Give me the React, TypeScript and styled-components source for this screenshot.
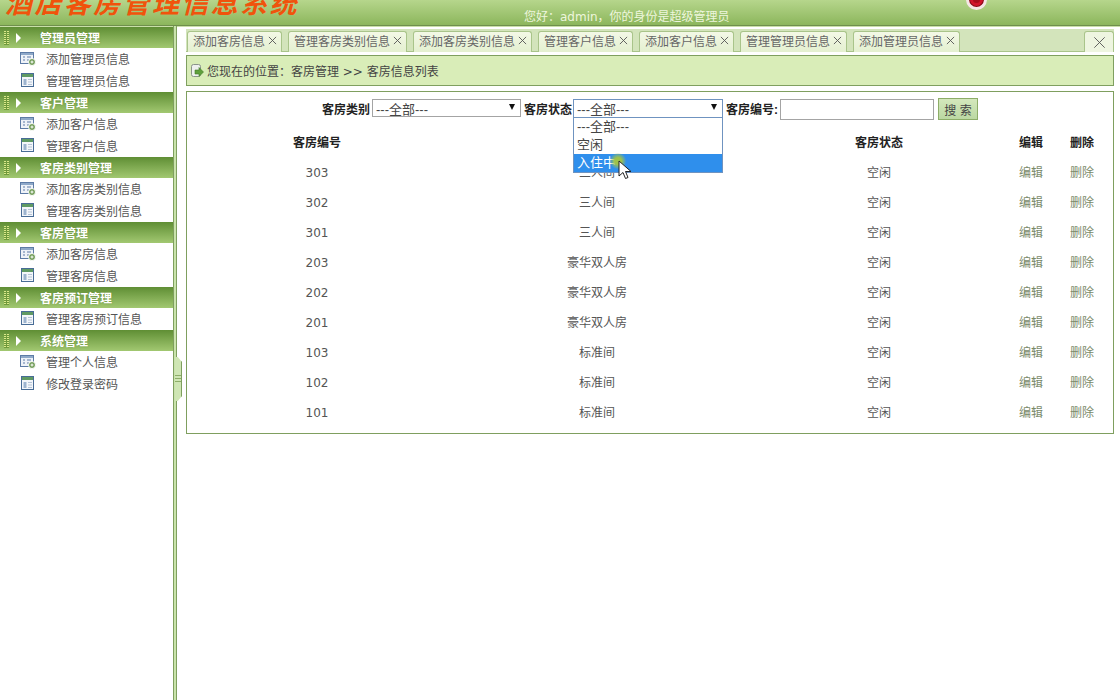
import * as React from "react";
import styled, { createGlobalStyle } from "styled-components";

const GlobalStyle = createGlobalStyle`
  html, body {
    margin: 0;
    padding: 0;
    height: 100%;
    background: #fff;
    font-family: "Liberation Sans", "Noto Sans CJK SC", sans-serif;
    font-size: 12px;
    overflow: hidden;
  }
`;

const Page = styled.div`
  width: 1120px;
  height: 700px;
  position: relative;
  overflow: hidden;
  display: flex;
  flex-direction: column;
`;

const Header = styled.div`
  height: 25px;
  flex: none;
  display: flex;
  overflow: hidden;
  background: linear-gradient(#b6d68c, #8cb65c);
  border-bottom: 1px solid #6f8f4c;
  box-shadow: 0 1px 0 #c9dfa8;
`;

const Title = styled.div`
  width: 524px;
  flex: none;
  margin-top: -15px;
  padding-left: 5px;
  box-sizing: border-box;
  font-family: "Noto Sans CJK SC", sans-serif;
  font-size: 27px;
  line-height: 34px;
  font-weight: 700;
  font-style: italic;
  letter-spacing: 2.4px;
  color: #f0530c;
  white-space: nowrap;
`;

const Greeting = styled.div`
  margin-top: 10px;
  font-family: "DejaVu Sans", "Noto Sans CJK SC", sans-serif;
  font-size: 12px;
  line-height: 15px;
  color: #eef6dd;
  white-space: nowrap;
`;

const RecordDot = styled.div`
  position: absolute;
  left: 966px;
  top: -11px;
  width: 21px;
  height: 21px;
  box-sizing: border-box;
  border-radius: 50%;
  background: #d2132a;
  border: 3px solid #f6e6e6;
  box-shadow: inset 0 0 0 1px #7d0c18;

  &::after {
    content: "";
    position: absolute;
    left: 4px;
    top: 4px;
    width: 7px;
    height: 7px;
    border-radius: 50%;
    background: #a80c1c;
  }
`;

const Body = styled.div`
  flex: 1;
  display: flex;
  min-height: 0;
`;

const Sidebar = styled.div`
  width: 173px;
  flex: none;
  padding-top: 1px;
  box-sizing: border-box;
`;

const GroupHead = styled.div`
  height: 21px;
  display: flex;
  align-items: center;
  background: linear-gradient(#5f8e34, #a2c871);
  color: #fff;
  font-weight: 700;
  font-size: 12px;
  text-shadow: 0 0 2px #6d9440;
  padding-left: 4px;
`;

const GripDots = styled.span`
  width: 5px;
  height: 14px;
  flex: none;
  background:
    linear-gradient(90deg, transparent 2px, #6f9a3c 2px 3px, transparent 3px),
    repeating-linear-gradient(#d9e88a 0 1px, #6f9a3c 1px 2px);
`;

const Arrow = styled.span`
  width: 0;
  height: 0;
  margin-left: 7px;
  margin-right: 19px;
  border-left: 5px solid #fff;
  border-top: 5px solid transparent;
  border-bottom: 5px solid transparent;
`;

const MenuItem = styled.div`
  height: 22px;
  box-sizing: border-box;
  padding: 0 0 2px 20px;
  display: flex;
  align-items: center;
  gap: 10px;
  color: #555;
  white-space: nowrap;
`;

const Splitter = styled.div`
  width: 4px;
  flex: none;
  box-sizing: border-box;
  position: relative;
  background: #c9e3ab;
  border-left: 1px solid #7f9f5f;
  border-right: 1px solid #7f9f5f;
`;

const SplitterGrip = styled.div`
  position: absolute;
  left: 1px;
  top: 331px;
  width: 7px;
  height: 44px;
  box-sizing: border-box;
  border-right: 1px solid #7f9f5f;
  background:
    repeating-linear-gradient(#8dad68 0 1px, transparent 1px 3px) center / 100% 9px no-repeat,
    #cfe6b4;
  clip-path: polygon(0 0, 40% 0, 100% 5px, 100% calc(100% - 5px), 40% 100%, 0 100%);
`;

const Main = styled.div`
  flex: 1;
  min-width: 0;
  padding: 3px 6px 0 9px;
  position: relative;
`;

const TabStrip = styled.div`
  height: 23px;
  box-sizing: border-box;
  display: flex;
  gap: 6px;
  padding: 2px 0 0 1px;
  background: #d3e4bb;
  border-bottom: 1px solid #a9c48a;
`;

const Tab = styled.div<{ $width: number }>`
  width: ${(p) => p.$width}px;
  box-sizing: border-box;
  height: 21px;
  padding: 0 0 3px 5px;
  display: flex;
  align-items: center;
  gap: 3px;
  border: 1px solid #a9c48a;
  border-bottom: none;
  border-radius: 3px 3px 0 0;
  background: linear-gradient(#f3f8e6, #e4f0d0);
  color: #666;
  white-space: nowrap;
`;

const TabClose = styled.span`
  width: 10px;
  display: inline-flex;
  color: #555;
`;

const CloseAll = styled.div`
  position: absolute;
  right: 6px;
  top: 5px;
  width: 30px;
  height: 21px;
  box-sizing: border-box;
  display: flex;
  align-items: center;
  justify-content: center;
  border: 1px solid #a9c48a;
  border-bottom: none;
  border-radius: 3px 3px 0 0;
  background: #eef5e0;
  color: #555;
`;

const Breadcrumb = styled.div`
  height: 31px;
  margin-top: 3px;
  box-sizing: border-box;
  display: flex;
  align-items: center;
  gap: 3px;
  padding-left: 3px;
  background: #d9edb8;
  border: 1px solid #7f9f5f;
  font-family: "DejaVu Sans", "Noto Sans CJK SC", sans-serif;
  color: #444;
  white-space: pre;
`;

const Panel = styled.div`
  margin-top: 5px;
  height: 343px;
  box-sizing: border-box;
  border: 1px solid #7f9f5f;
  padding-top: 6px;
  position: relative;
`;

const SearchRow = styled.div`
  height: 22px;
  display: flex;
  align-items: flex-start;
  justify-content: center;
  white-space: nowrap;
`;

const FieldLabel = styled.label<{ $left?: number; $right?: number }>`
  margin-left: ${(p) => p.$left ?? 0}px;
  margin-right: ${(p) => p.$right ?? 0}px;
  margin-top: 4px;
  line-height: 17px;
  font-weight: 700;
  color: #222;
`;

const FakeSelect = styled.div<{ $width: number; $active?: boolean }>`
  width: ${(p) => p.$width}px;
  height: ${(p) => (p.$active ? 19 : 18)}px;
  margin-top: 1px;
  box-sizing: border-box;
  display: flex;
  align-items: center;
  justify-content: space-between;
  padding: 0 5px 0 3px;
  background: #fff;
  border: 1px solid ${(p) => (p.$active ? "#6f93c0" : "#a4a4a4")};
  font-size: 13px;
  color: #444;
  position: relative;
`;

const Caret = styled.span`
  width: 0;
  height: 0;
  margin-bottom: 3px;
  border-left: 3px solid transparent;
  border-right: 3px solid transparent;
  border-top: 6px solid #111;
`;

const SearchInput = styled.input`
  width: 154px;
  height: 21px;
  margin-top: 1px;
  box-sizing: border-box;
  background: #fff;
  border: 1px solid #a4a4a4;
  outline: none;
`;

const SearchButton = styled.button`
  width: 40px;
  height: 22px;
  margin: 0 0 0 4px;
  padding: 0;
  background: linear-gradient(#d4e8bc, #bbd8a2);
  border: 1px solid #8dad68;
  color: #444;
  font-family: inherit;
  font-size: 12px;
`;

const DropList = styled.div`
  position: absolute;
  left: -1px;
  top: 17px;
  width: 150px;
  box-sizing: border-box;
  border: 1px solid #6f93c0;
  background: #fff;
  z-index: 2;
`;

const DropOption = styled.div<{ $hover?: boolean }>`
  height: 18px;
  line-height: 18px;
  padding-left: 3px;
  color: ${(p) => (p.$hover ? "#fff" : "#444")};
  background: ${(p) => (p.$hover ? "#2f8fec" : "#fff")};
`;

const ClickHalo = styled.span`
  position: absolute;
  left: 36px;
  top: 53px;
  width: 16px;
  height: 16px;
  border-radius: 50%;
  z-index: 3;
  background: radial-gradient(#9fc24a 30%, rgba(159, 194, 74, 0) 75%);
`;

const CursorIcon = styled.svg`
  position: absolute;
  left: 44px;
  top: 60px;
  z-index: 4;
`;

const Table = styled.table`
  width: 100%;
  margin-top: 6px;
  border-collapse: collapse;
  table-layout: fixed;
`;

const HeadCell = styled.th<{ $width: number }>`
  width: ${(p) => p.$width}px;
  height: 30px;
  padding: 0 0 2px;
  font-size: 12px;
  color: #222;
`;

const Cell = styled.td<{ $muted?: boolean }>`
  height: 30px;
  padding: 0;
  text-align: center;
  font-family: "DejaVu Sans", "Noto Sans CJK SC", sans-serif;
  line-height: 16px;
  color: ${(p) => (p.$muted ? "#7a8a6a" : "#555")};
`;

const tabs = [
  { label: "添加客房信息", width: 95 },
  { label: "管理客房类别信息", width: 119 },
  { label: "添加客房类别信息", width: 119 },
  { label: "管理客户信息", width: 95 },
  { label: "添加客户信息", width: 95 },
  { label: "管理管理员信息", width: 107 },
  { label: "添加管理员信息", width: 107 },
];

const menu: { title: string; items: { label: string; add?: boolean }[] }[] = [
  { title: "管理员管理", items: [{ label: "添加管理员信息", add: true }, { label: "管理管理员信息" }] },
  { title: "客户管理", items: [{ label: "添加客户信息", add: true }, { label: "管理客户信息" }] },
  { title: "客房类别管理", items: [{ label: "添加客房类别信息", add: true }, { label: "管理客房类别信息" }] },
  { title: "客房管理", items: [{ label: "添加客房信息", add: true }, { label: "管理客房信息" }] },
  { title: "客房预订管理", items: [{ label: "管理客房预订信息" }] },
  { title: "系统管理", items: [{ label: "管理个人信息", add: true }, { label: "修改登录密码" }] },
];

const rooms = [
  ["303", "三人间"],
  ["302", "三人间"],
  ["301", "三人间"],
  ["203", "豪华双人房"],
  ["202", "豪华双人房"],
  ["201", "豪华双人房"],
  ["103", "标准间"],
  ["102", "标准间"],
  ["101", "标准间"],
];

const AddIcon = () => (
  <svg width="16" height="15" viewBox="0 0 16 15">
    <rect x="0.5" y="1.5" width="13" height="11" fill="#eef2f8" stroke="#5d7ba6" />
    <rect x="1" y="2" width="12" height="2" fill="#8fa9c9" />
    <path d="M3 6h2M3 9h2M7 6h4M7 9h2" stroke="#5d7ba6" />
    <circle cx="12" cy="11" r="3.5" fill="#6f9a55" stroke="#fff" />
    <path d="M10.5 11h3M12 9.5v3" stroke="#fff" />
  </svg>
);

const ListIcon = () => (
  <svg width="16" height="15" viewBox="0 0 16 15">
    <rect x="1.5" y="0.5" width="12" height="13" fill="#f3f6fa" stroke="#486c96" />
    <rect x="2" y="1" width="11" height="3" fill="#5f9a63" />
    <rect x="3.5" y="6" width="3" height="6" fill="#9db4cf" />
    <path d="M8 6.5h4M8 9h4M8 11.5h4" stroke="#b4c3d6" />
  </svg>
);

const ArrowDocIcon = () => (
  <svg width="14" height="15" viewBox="0 0 14 15">
    <rect x="1.5" y="1.5" width="9" height="12" rx="2" fill="#eef1ee" stroke="#8a948a" />
    <path d="M5 7h4V4.5L13.5 9 9 13.5V11H5z" fill="#5fa03c" stroke="#3f7a26" strokeWidth="0.6" />
  </svg>
);

const CrossIcon = ({ size }: { size: number }) => (
  <svg width={size} height={size} viewBox="0 0 10 10">
    <path d="M1 1l8 8M9 1l-8 8" stroke="currentColor" strokeWidth={size > 10 ? 0.7 : 1} fill="none" />
  </svg>
);

export default function App() {
  return (
    <Page>
      <GlobalStyle />
      <Header>
        <Title>酒店客房管理信息系统</Title>
        <Greeting>您好：admin，你的身份是超级管理员</Greeting>
      </Header>
      <RecordDot />
      <Body>
        <Sidebar>
          {menu.map((group) => (
            <div key={group.title}>
              <GroupHead>
                <GripDots />
                <Arrow />
                {group.title}
              </GroupHead>
              {group.items.map((item) => (
                <MenuItem key={item.label}>
                  {item.add ? <AddIcon /> : <ListIcon />}
                  {item.label}
                </MenuItem>
              ))}
            </div>
          ))}
        </Sidebar>
        <Splitter>
          <SplitterGrip />
        </Splitter>
        <Main>
          <TabStrip>
            {tabs.map((tab) => (
              <Tab key={tab.label} $width={tab.width}>
                {tab.label}
                <TabClose>
                  <CrossIcon size={9} />
                </TabClose>
              </Tab>
            ))}
          </TabStrip>
          <CloseAll>
            <CrossIcon size={13} />
          </CloseAll>
          <Breadcrumb>
            <ArrowDocIcon />
            您现在的位置：客房管理 &gt;&gt; 客房信息列表
          </Breadcrumb>
          <Panel>
            <SearchRow>
              <FieldLabel $right={2}>客房类别</FieldLabel>
              <FakeSelect $width={149}>
                ---全部---
                <Caret />
              </FakeSelect>
              <FieldLabel $left={3} $right={1}>客房状态</FieldLabel>
              <FakeSelect $width={150} $active>
                ---全部---
                <Caret />
                <DropList>
                  <DropOption>---全部---</DropOption>
                  <DropOption>空闲</DropOption>
                  <DropOption $hover>入住中</DropOption>
                </DropList>
                <ClickHalo />
                <CursorIcon width="14" height="20" viewBox="0 0 14 20">
                  <path d="M1 1v15l4-3.5 2.5 6 2.5-1-2.5-6H13z" fill="#fff" stroke="#222" strokeWidth="1" />
                </CursorIcon>
              </FakeSelect>
              <FieldLabel $left={3} $right={2}>客房编号:</FieldLabel>
              <SearchInput />
              <SearchButton>搜 索</SearchButton>
            </SearchRow>
            <Table>
              <thead>
                <tr>
                  <HeadCell $width={260}>客房编号</HeadCell>
                  <HeadCell $width={300}>客房类型</HeadCell>
                  <HeadCell $width={264}>客房状态</HeadCell>
                  <HeadCell $width={40}>编辑</HeadCell>
                  <HeadCell $width={62}>删除</HeadCell>
                </tr>
              </thead>
              <tbody>
                {rooms.map(([no, type]) => (
                  <tr key={no}>
                    <Cell>{no}</Cell>
                    <Cell>{type}</Cell>
                    <Cell>空闲</Cell>
                    <Cell $muted>编辑</Cell>
                    <Cell $muted>删除</Cell>
                  </tr>
                ))}
              </tbody>
            </Table>
          </Panel>
        </Main>
      </Body>
    </Page>
  );
}
